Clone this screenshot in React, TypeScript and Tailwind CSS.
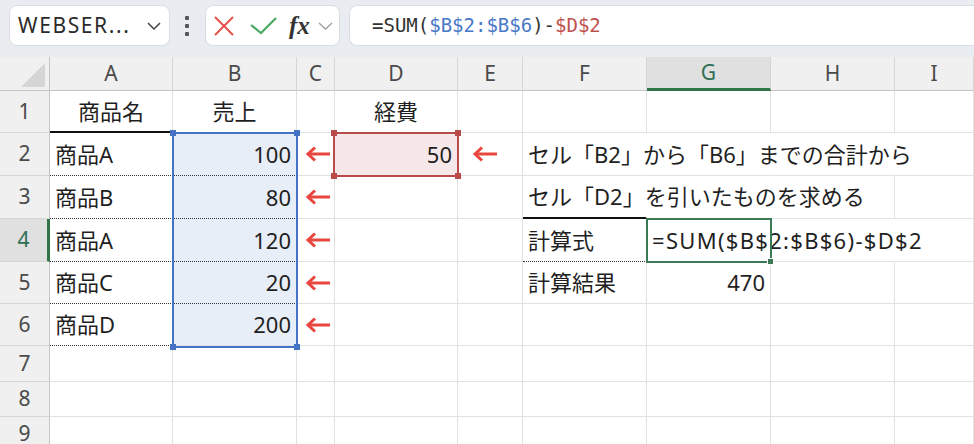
import React from 'react';

type Align = 'left' | 'right' | 'center';
type Bottom = 'grid' | 'solid' | 'dot';

interface CellDef {
  t?: string;
  a?: Align;
  bb?: Bottom;
  bg?: 'blue' | 'red';
  nr?: boolean;
  wide?: boolean;
  arrow?: 'c' | 'e';
}

const cols = [
  { k: 'A', w: 123 },
  { k: 'B', w: 124 },
  { k: 'C', w: 38 },
  { k: 'D', w: 123 },
  { k: 'E', w: 65 },
  { k: 'F', w: 124 },
  { k: 'G', w: 124 },
  { k: 'H', w: 124 },
  { k: 'I', w: 79 },
];

const rowHeights = [42, 43, 43, 43, 42, 42, 36, 35, 35];

const cells: Record<string, CellDef> = {
  A1: { t: '商品名', a: 'center', bb: 'solid' },
  B1: { t: '売上', a: 'center' },
  D1: { t: '経費', a: 'center' },

  A2: { t: '商品A', bb: 'dot' },
  B2: { t: '100', a: 'right', bb: 'dot', bg: 'blue' },
  C2: { arrow: 'c' },
  D2: { t: '50', a: 'right', bg: 'red' },
  E2: { arrow: 'e' },
  F2: { t: 'セル「B2」から「B6」までの合計から', nr: true },
  G2: { nr: true },
  H2: { nr: true },

  A3: { t: '商品B', bb: 'dot' },
  B3: { t: '80', a: 'right', bb: 'dot', bg: 'blue' },
  C3: { arrow: 'c' },
  F3: { t: 'セル「D2」を引いたものを求める', nr: true, bb: 'solid' },
  G3: { nr: true },

  A4: { t: '商品A', bb: 'dot' },
  B4: { t: '120', a: 'right', bb: 'dot', bg: 'blue' },
  C4: { arrow: 'c' },
  F4: { t: '計算式', bb: 'dot' },
  G4: { t: '=SUM($B$2:$B$6)-$D$2', nr: true, wide: true },
  H4: { nr: true },

  A5: { t: '商品C', bb: 'dot' },
  B5: { t: '20', a: 'right', bb: 'dot', bg: 'blue' },
  C5: { arrow: 'c' },
  F5: { t: '計算結果' },
  G5: { t: '470', a: 'right' },

  A6: { t: '商品D', bb: 'dot' },
  B6: { t: '200', a: 'right', bg: 'blue' },
  C6: { arrow: 'c' },
};

const Arrow = () => (
  <svg width="26" height="16" viewBox="0 0 26 16" fill="none">
    <path d="M25 8H3" stroke="#e8463e" strokeWidth="3" />
    <path d="M10 1.5L3 8L10 14.5" stroke="#e8463e" strokeWidth="3" strokeLinejoin="miter" />
  </svg>
);

const Toolbar = () => (
  <div className="h-[57px] bg-[#e9edf1] flex items-start pt-[5px] font-['Noto_Sans',sans-serif]">
    <div className="ml-[9px] w-[161px] h-[41px] rounded-[8px] bg-white border border-[#d9dde2] flex items-center justify-between pl-[8px] pr-[8px]">
      <span className="text-[21px] text-[#2b2b2b] tracking-[1.6px]">WEBSER...</span>
      <svg width="14" height="8" viewBox="0 0 14 8" fill="none">
        <path d="M1 1l6 6 6-6" stroke="#444" strokeWidth="1.5" />
      </svg>
    </div>
    <div className="ml-[14px] w-[6px] h-[41px] flex flex-col items-center justify-center gap-[4px]">
      <span className="w-[4px] h-[4px] bg-[#555] rounded-[1px]" />
      <span className="w-[4px] h-[4px] bg-[#555] rounded-[1px]" />
      <span className="w-[4px] h-[4px] bg-[#555] rounded-[1px]" />
    </div>
    <div className="ml-[15px] w-[135px] h-[41px] rounded-[8px] bg-white border border-[#d9dde2] flex items-center pl-[8px]">
      <svg width="20" height="20" viewBox="0 0 20 20" fill="none">
        <path d="M1 1L19 19M19 1L1 19" stroke="#e3524b" strokeWidth="2" />
      </svg>
      <svg className="ml-[16px]" width="27" height="18" viewBox="0 0 27 18" fill="none">
        <path d="M1 8L11 16L26 1" stroke="#4aa860" strokeWidth="2.2" />
      </svg>
      <span className="ml-[12px] font-['Liberation_Serif',serif] italic font-bold text-[25px] leading-none text-[#333]">fx</span>
      <svg className="ml-[8px]" width="15" height="8" viewBox="0 0 15 8" fill="none">
        <path d="M1 1l6.5 6 6.5-6" stroke="#a0a0a0" strokeWidth="1.4" />
      </svg>
    </div>
    <div className="ml-[9px] flex-1 h-[41px] rounded-l-[8px] bg-white border border-r-0 border-[#d9dde2] flex items-center pl-[22px] font-['DejaVu_Sans_Mono',monospace] text-[19px] text-[#333]">
      <span>=SUM(</span>
      <span className="text-[#4a78c8]">$B$2:$B$6</span>
      <span>)-</span>
      <span className="text-[#c0504d]">$D$2</span>
    </div>
  </div>
);

const HeaderRow = () => (
  <div className="flex h-[34px] font-['Noto_Sans',sans-serif] text-[21px] text-[#4a4a4a]">
    <div className="w-[50px] shrink-0 bg-[#f0f0f0] border-r border-b border-r-[#c4c4c4] border-b-[#c4c4c4] flex items-end justify-end pr-[4px] pb-[3px]">
      <svg width="24" height="24" viewBox="0 0 24 24">
        <path d="M24 0V24H0Z" fill="#d5d5d5" />
      </svg>
    </div>
    {cols.map((c) => (
      <div
        key={c.k}
        style={{ width: c.w }}
        className={
          c.k === 'G'
            ? 'shrink-0 bg-[#e0e0e0] border-r border-r-[#d6d6d6] border-b-[3px] border-b-[#2f7548] flex items-center justify-center text-[#2f6f56]'
            : 'shrink-0 bg-[#f0f0f0] border-r border-r-[#d6d6d6] border-b border-b-[#c4c4c4] flex items-center justify-center'
        }
      >
        {c.k}
      </div>
    ))}
  </div>
);

function cellClass(d: CellDef | undefined) {
  const parts = ['shrink-0 flex items-center border-r border-b whitespace-nowrap'];
  parts.push(d?.nr ? 'border-r-transparent' : 'border-r-[#e1e1e1]');
  if (d?.bb === 'solid') parts.push('border-b-2 border-b-[#111]');
  else if (d?.bb === 'dot') parts.push('border-b-[#333] [border-bottom-style:dotted]');
  else parts.push('border-b-[#e1e1e1]');
  if (d?.bg === 'blue') parts.push('bg-[#e8eef8]');
  if (d?.bg === 'red') parts.push('bg-[#f6e8e8]');
  if (d?.a === 'right') parts.push('justify-end pr-[5px]');
  else if (d?.a === 'center') parts.push('justify-center');
  else parts.push('pl-[5px]');
  if (d?.arrow === 'c') parts.push('pl-[8px]');
  if (d?.arrow === 'e') parts.push('pl-[14px]');
  if (d?.wide) parts.push('tracking-[1.3px]');
  return parts.join(' ');
}

const Handle = ({ cls }: { cls: string }) => <span className={'absolute w-[6px] h-[6px] ' + cls} />;

const Body = () => (
  <div className="relative font-['Noto_Sans','Noto_Sans_CJK_JP',sans-serif] text-[22px] text-[#1f1f1f]">
    {rowHeights.map((h, i) => {
      const r = i + 1;
      return (
        <div key={r} className="flex" style={{ height: h }}>
          <div
            className={
              r === 4
                ? "w-[50px] shrink-0 bg-[#e0e0e0] border-r-[3px] border-r-[#2f7548] border-b border-b-[#d6d6d6] flex items-center justify-center text-[21px] text-[#2f6f56]"
                : "w-[50px] shrink-0 bg-[#f0f0f0] border-r border-r-[#c4c4c4] border-b border-b-[#d6d6d6] flex items-center justify-center text-[21px] text-[#4a4a4a]"
            }
          >
            {r}
          </div>
          {cols.map((c) => {
            const d = cells[c.k + r];
            return (
              <div key={c.k} style={{ width: c.w }} className={cellClass(d)}>
                {d?.arrow ? <Arrow /> : d?.t ? <span>{d.t}</span> : null}
              </div>
            );
          })}
        </div>
      );
    })}

    {/* B2:B6 reference */}
    <div className="absolute left-[172px] top-[41px] w-[126px] h-[216px] border-2 border-[#4472c4]">
      <Handle cls="-left-[4px] -top-[4px] bg-[#4472c4]" />
      <Handle cls="-right-[4px] -top-[4px] bg-[#4472c4]" />
      <Handle cls="-left-[4px] -bottom-[4px] bg-[#4472c4]" />
      <Handle cls="-right-[4px] -bottom-[4px] bg-[#4472c4]" />
    </div>

    {/* D2 reference */}
    <div className="absolute left-[333px] top-[41px] w-[126px] h-[45px] border-2 border-[#b84a4a]">
      <Handle cls="-left-[4px] -top-[4px] bg-[#b84a4a]" />
      <Handle cls="-right-[4px] -top-[4px] bg-[#b84a4a]" />
      <Handle cls="-left-[4px] -bottom-[4px] bg-[#b84a4a]" />
      <Handle cls="-right-[4px] -bottom-[4px] bg-[#b84a4a]" />
    </div>

    {/* active cell G4 */}
    <div className="absolute left-[646px] top-[127px] w-[126px] h-[45px] border-2 border-[#3b7a55]">
      <span className="absolute -right-[4px] -bottom-[4px] w-[5px] h-[5px] bg-[#3b7a55] border border-white box-content" />
    </div>
  </div>
);

export default function App() {
  return (
    <div className="w-[974px] h-[444px] overflow-hidden bg-white">
      <Toolbar />
      <HeaderRow />
      <Body />
    </div>
  );
}
